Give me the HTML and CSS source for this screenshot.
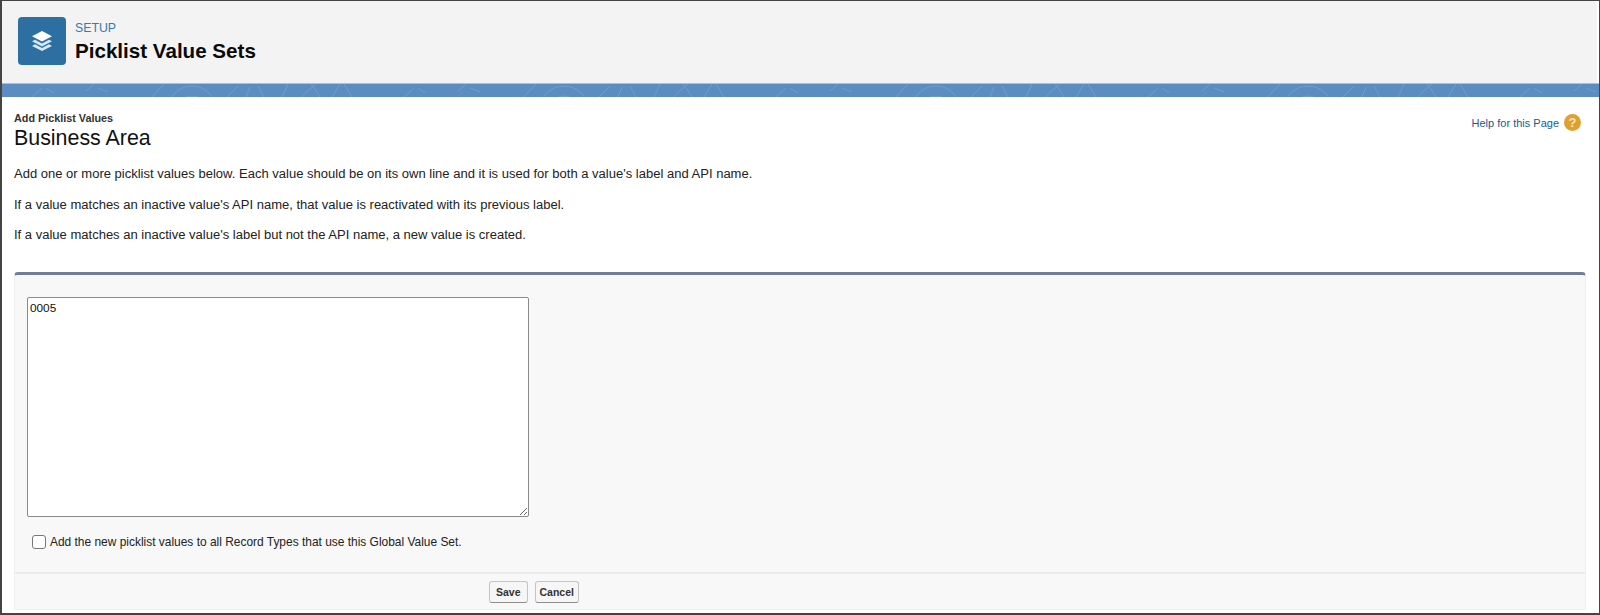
FILE: index.html
```html
<!DOCTYPE html>
<html lang="en">
<head>
    <meta charset="UTF-8">
    <title>Picklist Value Sets</title>
    <link rel="stylesheet" href="styles.css">
</head>
<body>
    <div id="frame">
        <div class="page-header">
            <div class="header-icon">
                <svg width="24" height="24" viewBox="0 0 24 24">
                    <path d="M12 2 22 7.2 12 12.4 2 7.2Z" fill="#fff"/>
                    <path d="M5 10.7 12 14.4l7-3.7 3 1.6-10 5.2-10-5.2Z" fill="#d6e8f2"/>
                    <path d="M5 15.3 12 19l7-3.7 3 1.6L12 22.1 2 16.9Z" fill="#d6e8f2"/>
                </svg>
            </div>
            <div class="header-text">
                <div class="header-setup">SETUP</div>
                <div class="header-title">Picklist Value Sets</div>
            </div>
        </div>
        <div class="band">
            <svg width="1596" height="13" fill="none" stroke="#729cc8" stroke-width="1">
                <defs>
                    <pattern id="swirl" width="372" height="13" patternUnits="userSpaceOnUse">
                        <circle cx="190" cy="26" r="14"/>
                        <circle cx="190" cy="26" r="24"/>
                        <path d="M225 13 236 2M244 13l4-10M262 13l-6-11M280 13l6-13M300 13c4-5 8-8 14-13M318 13c-3-5-5-8-9-13M330 13l8-13M350 13l-8-13M30 13l10-9M44 4l8 5M84 7l8-7M96 4l10 4M150 13l12-13"/>
                    </pattern>
                </defs>
                <rect width="1596" height="13" fill="url(#swirl)" stroke="none"/>
            </svg>
        </div>
        <div class="content">
            <div class="title-row">
                <div>
                    <div class="crumb">Add Picklist Values</div>
                    <h1 class="area-name">Business Area</h1>
                </div>
                <div class="help">
                    <a class="help-link" href="#">Help for this Page</a>
                    <span class="help-icon">?</span>
                </div>
            </div>
            <p class="intro">Add one or more picklist values below. Each value should be on its own line and it is used for both a value's label and API name.</p>
            <p class="intro">If a value matches an inactive value's API name, that value is reactivated with its previous label.</p>
            <p class="intro">If a value matches an inactive value's label but not the API name, a new value is created.</p>
            <div class="panel">
                <div class="panel-body">
                    <textarea class="values" spellcheck="false">0005</textarea>
                    <label class="check-row">
                        <input type="checkbox" class="check">
                        <span>Add the new picklist values to all Record Types that use this Global Value Set.</span>
                    </label>
                </div>
                <div class="panel-footer">
                    <button class="btn btn-save">Save</button>
                    <button class="btn btn-cancel">Cancel</button>
                </div>
            </div>
        </div>
    </div>
</body>
</html>
```

FILE: styles.css
```css
*{
    padding:0;
    margin:0;
    box-sizing:border-box;
}
html,body{
    height:100%;
    overflow:hidden;
    background:#fff;
}
body{
    font-family:"Liberation Sans",Arial,sans-serif;
    color:#111;
}
#frame{
    height:615px;
    border:solid #444;
    border-width:1px 1px 2px 2px;
    display:flex;
    flex-direction:column;
}
.page-header{
    height:82px;
    margin-right:2px;
    background:#f3f3f3;
    border-radius:0 4px 0 0;
    display:flex;
    align-items:flex-start;
    padding:16px 0 0 16px;
    gap:9px;
}
.header-icon{
    width:48px;
    height:48px;
    background:#2d6fa1;
    border-radius:4px;
    display:flex;
    align-items:center;
    justify-content:center;
}
.header-text{
    padding-top:4px;
}
.header-setup{
    font-size:12.3px;
    line-height:14px;
    color:#2f7cad;
}
.header-title{
    font-size:20.6px;
    font-weight:bold;
    line-height:24px;
    margin-top:4px;
    color:#0a0a0a;
}
.band{
    height:14px;
    background:#5b8dc0;
    border-top:1px solid #a9c0d8;
    overflow:hidden;
    line-height:0;
}
.content{
    flex:1;
    display:flex;
    flex-direction:column;
    padding:15px 13px 3px 12px;
}
.title-row{
    display:flex;
    justify-content:space-between;
    align-items:flex-start;
}
.crumb{
    font-size:10.8px;
    font-weight:bold;
    line-height:13px;
    color:#333;
}
.area-name{
    font-size:21.4px;
    font-weight:normal;
    line-height:25px;
    margin-top:1px;
    color:#111;
}
.help{
    display:flex;
    align-items:center;
    gap:5px;
    margin-top:2px;
    padding-right:5px;
}
.help-link{
    font-size:11px;
    color:#1c5a8c;
    text-decoration:none;
}
.help-icon{
    width:17px;
    height:17px;
    border-radius:50%;
    background:#e0a030;
    color:#fbe7b8;
    font-size:13px;
    font-weight:bold;
    line-height:17px;
    text-align:center;
}
.intro{
    font-size:13.03px;
    line-height:15px;
    color:#222;
    margin-bottom:15.6px;
}
.title-row + .intro{
    margin-top:15px;
}
.panel{
    flex:1;
    margin-top:14px;
    background:#f8f8f8;
    border:solid #f0f0f0;
    border-width:0 1px 1px 1px;
    border-top:3px solid #6f7f98;
    border-radius:4px 4px 0 0;
    display:flex;
    flex-direction:column;
}
.panel-body{
    height:299px;
    padding:22px 0 0 12px;
    border-bottom:2px solid #ececec;
}
.values{
    display:block;
    width:502px;
    height:220px;
    padding:3px 2px;
    border:1px solid #8a8a8a;
    border-radius:2px;
    background:#fff;
    font-family:"Liberation Sans",Arial,sans-serif;
    font-size:11.8px;
    color:#111;
    outline:none;
}
.check-row{
    display:flex;
    align-items:center;
    gap:4px;
    margin:18px 0 0 5px;
    font-size:11.95px;
    color:#222;
}
.check{
    appearance:none;
    width:14px;
    height:14px;
    border:1px solid #777;
    border-radius:3px;
    background:#fff;
}
.panel-footer{
    flex:1;
    display:flex;
    align-items:flex-start;
    gap:7px;
    padding:7px 0 0 474px;
}
.btn{
    height:22px;
    border:1px solid #c4c4c4;
    border-bottom-color:#8f8f8f;
    border-radius:3px;
    background:#f6f6f6;
    font-family:"Liberation Sans",Arial,sans-serif;
    font-size:10.5px;
    font-weight:bold;
    color:#333;
}
.btn-save{
    padding:0 6px;
}
.btn-cancel{
    padding:0 4px;
}
```
